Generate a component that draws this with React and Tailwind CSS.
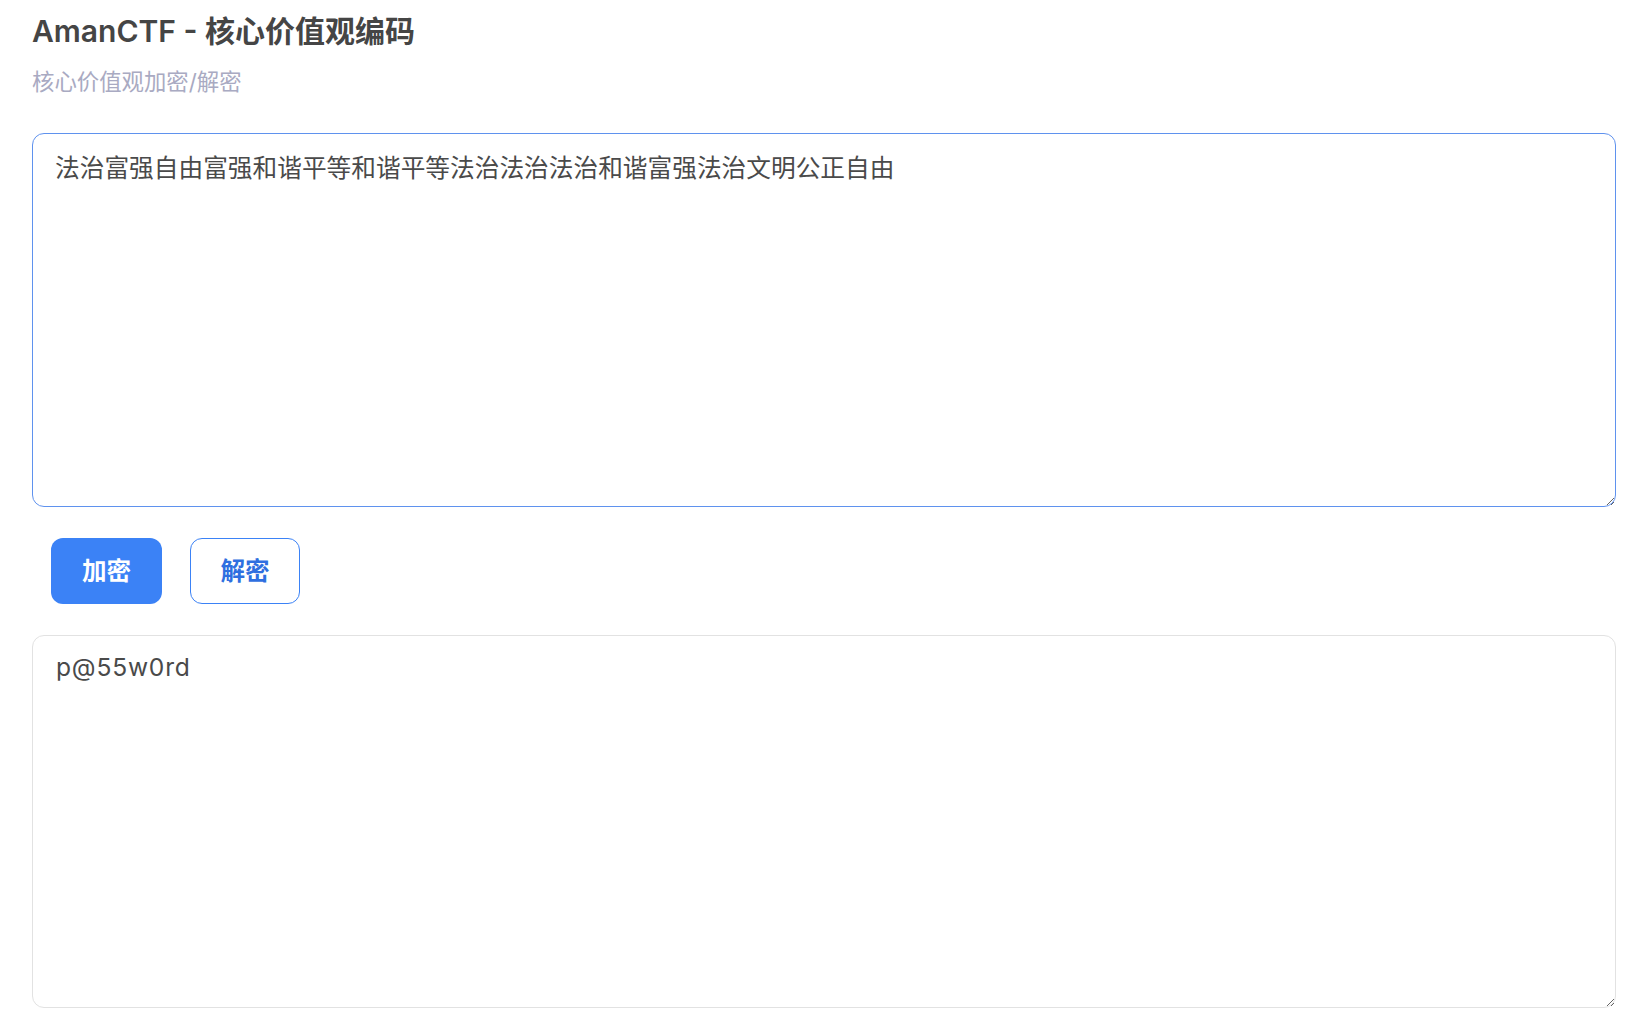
import React, { useState } from 'react';

const FONT = "font-['Inter','Noto_Sans_CJK_SC',sans-serif]";

export default function App() {
  const [input, setInput] = useState('法治富强自由富强和谐平等和谐平等法治法治法治和谐富强法治文明公正自由');
  const [output, setOutput] = useState('p@55w0rd');

  return (
    <div className={`min-h-screen bg-white ${FONT} text-[#4a4a4a]`}>
      <div className="pl-[32px] pr-[10px] pt-[13px]">
        {/* Header */}
        <h1 className="text-[30px] leading-[36px] font-semibold text-[#454545]">
          AmanCTF - <span className="font-bold">核心价值观编码</span>
        </h1>
        <p className="mt-[18px] text-[22.4px] leading-[30px] text-[#a9aac2]">核心价值观加密/解密</p>

        {/* Input */}
        <textarea
          value={input}
          onChange={(e) => setInput(e.target.value)}
          className={`mt-[36px] block w-[1584px] h-[374px] rounded-[12px] border border-[#5f92ee] bg-white px-[22px] pt-[16px] text-[24.7px] leading-[37px] text-[#4a4a4a] outline-none ${FONT}`}
        />

        {/* Actions */}
        <div className="flex gap-[28px] pl-[19px] py-[31px]">
          <button className="w-[111px] h-[66px] rounded-[12px] bg-[#3b82f6] text-white text-[24.6px] font-bold">
            加密
          </button>
          <button className="w-[110px] h-[66px] rounded-[12px] border border-[#3b82f6] bg-white text-[#2f6fe0] text-[24.6px] font-bold">
            解密
          </button>
        </div>

        {/* Output */}
        <textarea
          value={output}
          onChange={(e) => setOutput(e.target.value)}
          className={`block w-[1584px] h-[373px] rounded-[12px] border border-[#e2e2e2] bg-white px-[23px] pt-[13px] text-[24.6px] leading-[37px] tracking-[0.8px] text-[#4a4a4a] outline-none ${FONT}`}
        />
      </div>
    </div>
  );
}
